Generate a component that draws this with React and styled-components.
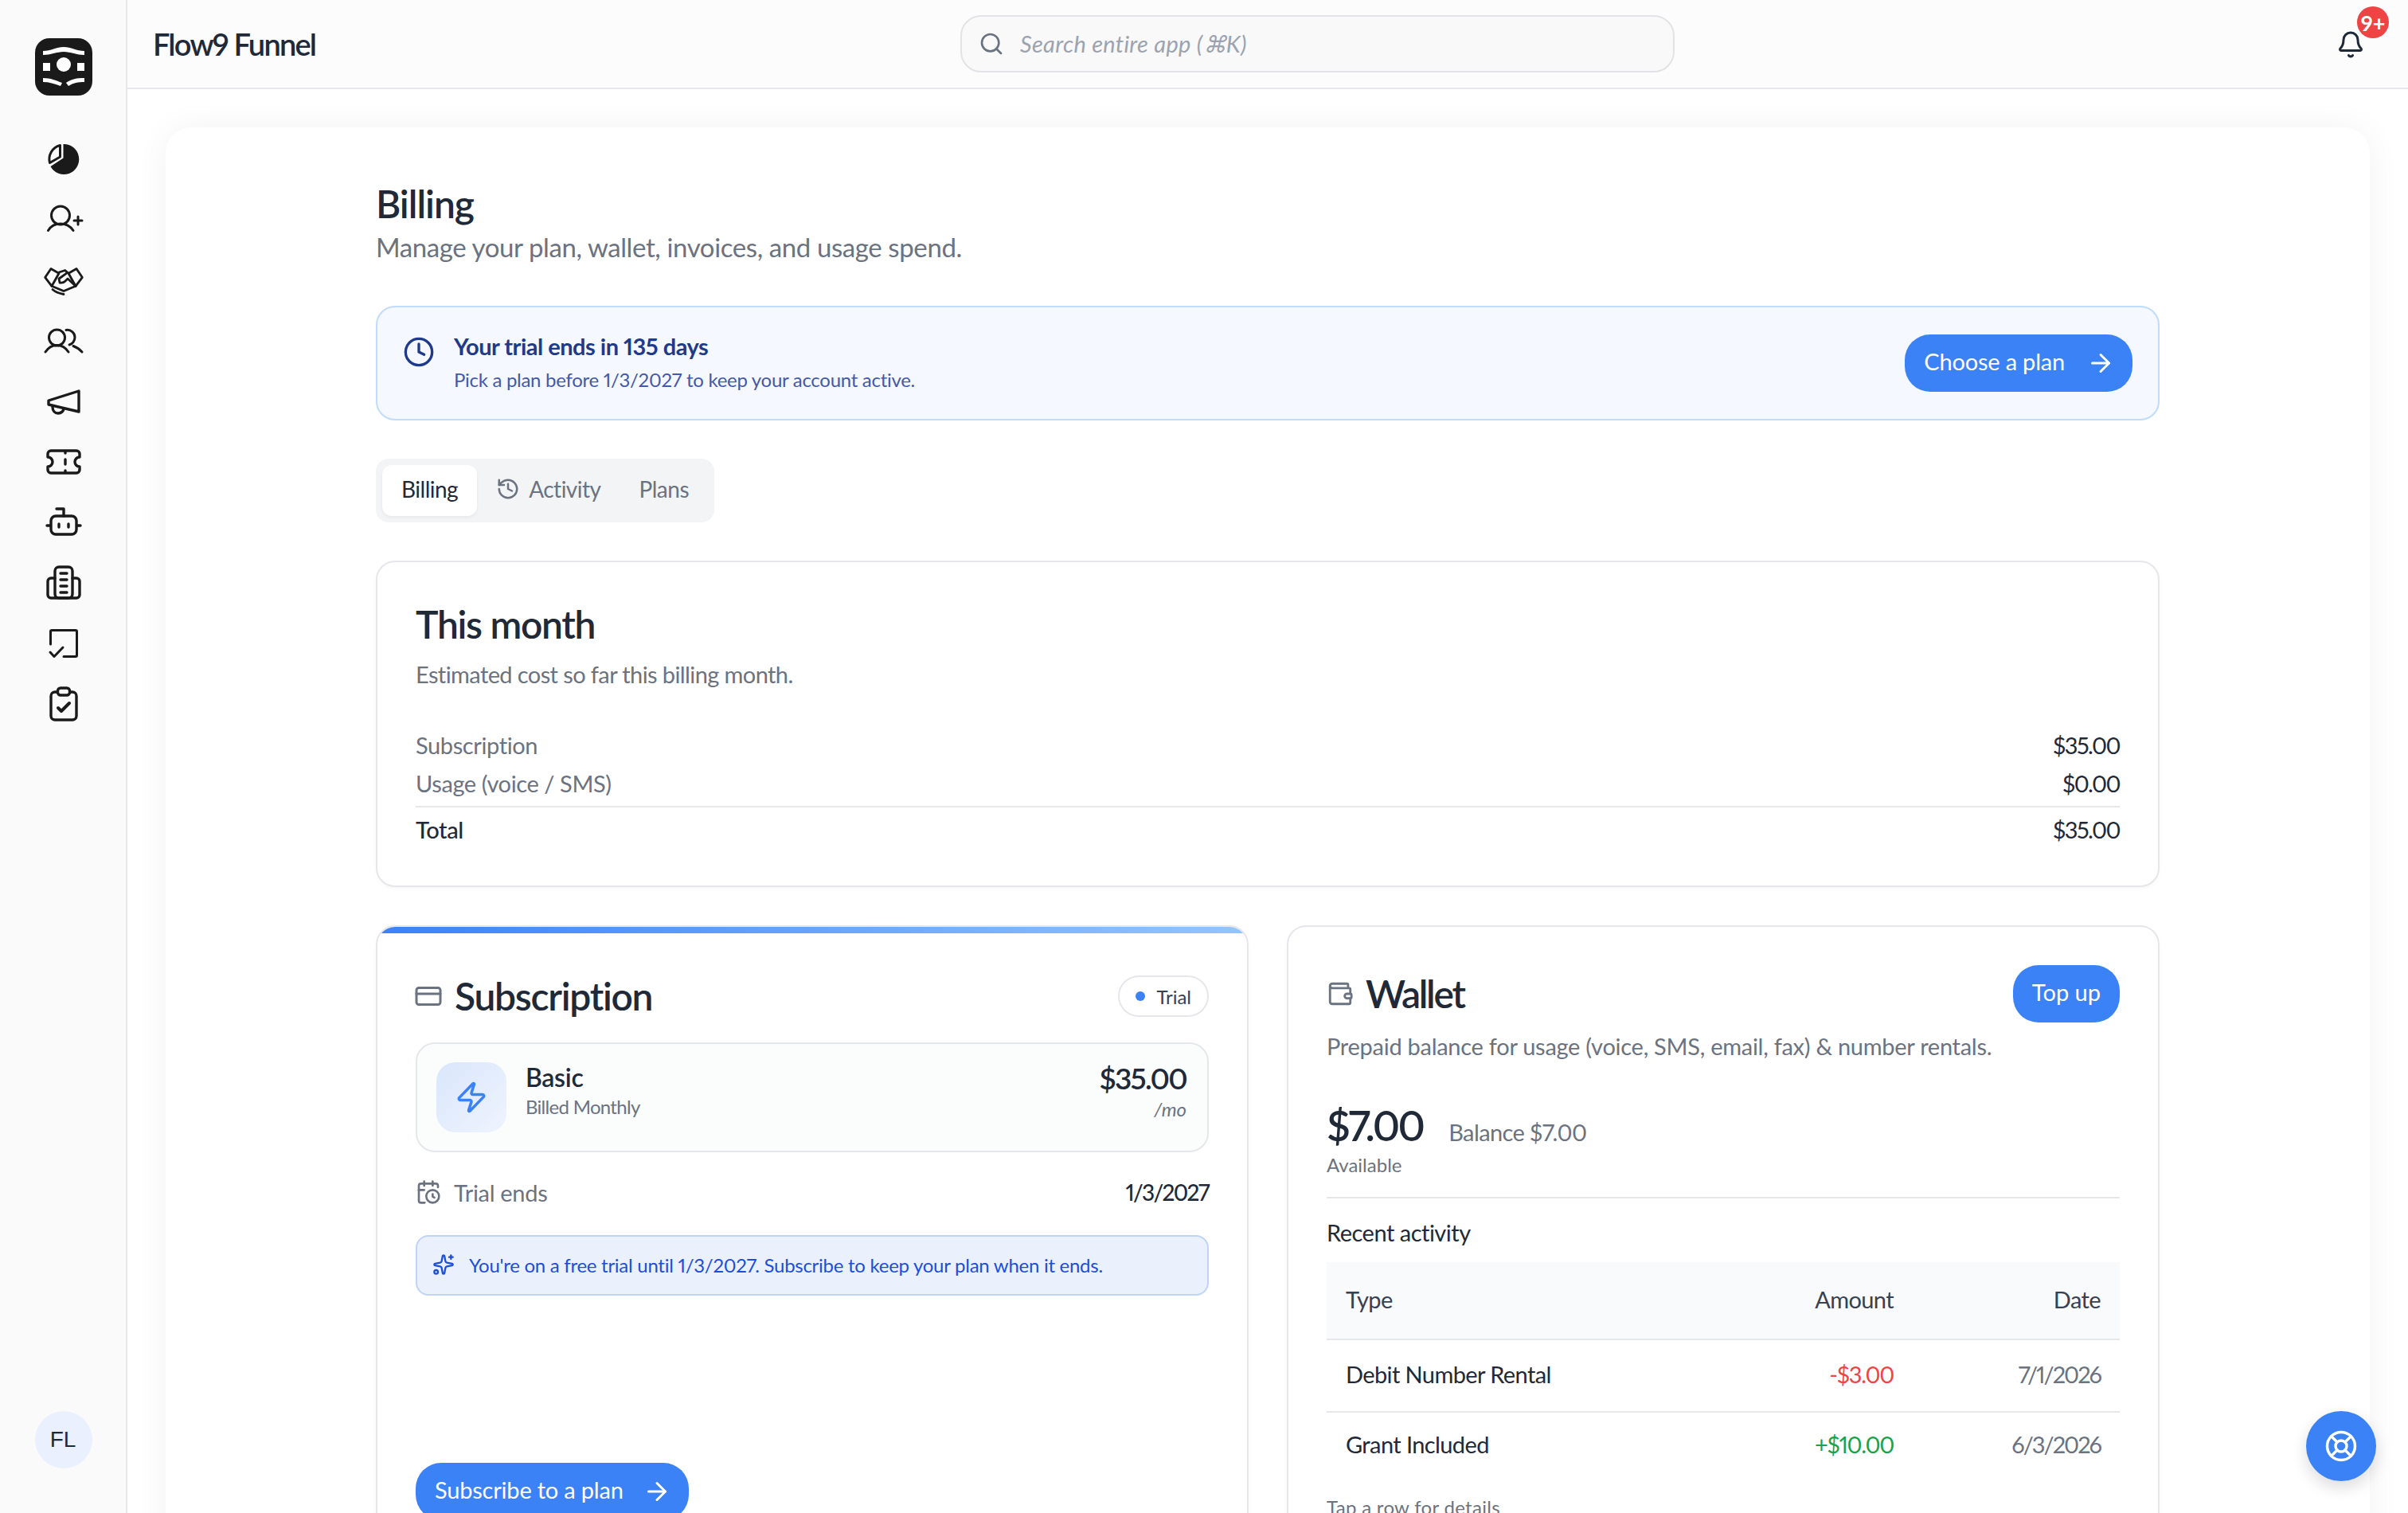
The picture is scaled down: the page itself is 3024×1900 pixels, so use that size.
import React from "react"
import styled, { createGlobalStyle } from "styled-components"
import {
  ArrowRight,
  Bell,
  CalendarClock,
  Clock,
  CreditCard,
  History,
  LifeBuoy,
  Search,
  Sparkles,
  Wallet,
  Zap,
} from "lucide-react"

const GlobalStyle = createGlobalStyle`
  html, body {
    margin: 0;
    padding: 0;
    height: 100%;
    overflow: hidden;
    background: #fff;
  }
  body {
    font-family: "Lato", "Noto Sans", sans-serif;
    font-variant-numeric: proportional-nums lining-nums;
    color: #1f2937;
  }
  * {
    box-sizing: border-box;
  }
`

const Shell = styled.div`
  display: grid;
  grid-template-columns: 160px 1fr;
  grid-template-rows: 1900px;
  height: 1900px;
  overflow: hidden;
`

const Sidebar = styled.aside`
  display: flex;
  flex-direction: column;
  align-items: center;
  padding: 48px 0 56px 2px;
  background: #fafafa;
  border-right: 2px solid #e5e7eb;
`

const Logo = styled.svg`
  width: 72px;
  height: 72px;
  flex: none;
`

const Nav = styled.nav`
  display: flex;
  flex-direction: column;
  gap: 32px;
  margin-top: 58px;
`

const NavIcon = styled.svg`
  display: block;
  width: 44px;
  height: 44px;
  overflow: visible;
  fill: none;
  stroke: #1a1a1a;
  stroke-width: ${p => p.$weight || 3.4};
  stroke-linecap: round;
  stroke-linejoin: round;
`

const Avatar = styled.div`
  display: flex;
  align-items: center;
  justify-content: center;
  width: 72px;
  height: 72px;
  margin-top: auto;
  padding-right: 2px;
  border-radius: 50%;
  background: #ebf0ff;
  color: #1f2937;
  font-family: "Liberation Sans", sans-serif;
  font-size: 28px;
`

const Column = styled.div`
  display: flex;
  flex-direction: column;
  min-width: 0;
  min-height: 0;
`

const Header = styled.header`
  display: grid;
  grid-template-columns: 1014px 897px 1fr;
  align-items: center;
  height: 112px;
  padding: 0 24px 0 32px;
  background: #fcfcfc;
  border-bottom: 2px solid #e5e7eb;
  flex: none;
`

const AppName = styled.div`
  font-size: 38px;
  font-weight: 600;
  letter-spacing: -1.8px;
  color: #1f2937;
`

const SearchBox = styled.div`
  display: flex;
  align-items: center;
  gap: 20px;
  height: 72px;
  padding: 0 21px;
  background: #f9f9f9;
  border: 2px solid #e2e3e7;
  border-radius: 26px;
  color: #6b7280;
`

const Placeholder = styled.span`
  font-size: 29px;
  font-style: italic;
  letter-spacing: 0.3px;
  color: #9ca3af;
`

const BellWrap = styled.div`
  position: relative;
  justify-self: end;
  width: 36px;
  height: 36px;
  margin-right: 30px;
  margin-top: 2px;
  color: #1f2937;
`

const Badge = styled.span`
  position: absolute;
  top: -30px;
  left: 26px;
  display: flex;
  align-items: center;
  justify-content: center;
  width: 40px;
  height: 40px;
  border-radius: 50%;
  background: #ef4444;
  color: #fff;
  font-size: 27px;
  font-weight: 700;
`

const Main = styled.main`
  flex: 1;
  min-height: 0;
  padding: 48px 48px 0;
  background: #fff;
`

const Page = styled.div`
  padding: 68px 264px 60px;
  background: #fff;
  border-radius: 32px;
  box-shadow: 0 0 44px rgba(0, 0, 0, 0.05);
`

const PageTitle = styled.h1`
  margin: 0;
  font-size: 48px;
  line-height: 56px;
  font-weight: 600;
  letter-spacing: -1px;
  color: #1f2937;
`

const PageSub = styled.p`
  margin: 6px 0 0;
  font-size: 33px;
  line-height: 40px;
  letter-spacing: -0.4px;
  color: #6b7280;
`

const TrialBanner = styled.section`
  display: flex;
  align-items: center;
  justify-content: space-between;
  height: 144px;
  margin-top: 54px;
  padding: 0 32px;
  background: #f5f8ff;
  border: 2px solid #bfdbfe;
  border-radius: 24px;
`

const BannerLeft = styled.div`
  display: flex;
  align-items: flex-start;
  gap: 24px;
  color: #1e3a8a;

  svg {
    margin-top: 5px;
  }
`

const BannerTitle = styled.div`
  margin-top: -2px;
  font-size: 29px;
  line-height: 40px;
  font-weight: 700;
  letter-spacing: -0.5px;
  color: #1e3a8a;
`

const BannerSub = styled.div`
  margin-top: 4px;
  font-size: 24px;
  line-height: 36px;
  letter-spacing: -0.29px;
  color: #4459a8;
`

const Button = styled.button`
  display: inline-flex;
  align-items: center;
  gap: ${p => p.$gap || 0}px;
  height: 72px;
  padding: 0 22px 0 24px;
  border: none;
  border-radius: 32px;
  background: #3b82f6;
  color: #fff;
  font-family: inherit;
  font-size: 29px;
  letter-spacing: -0.2px;
  white-space: nowrap;
`

const ButtonLabel = styled.span`
  margin-top: -6px;
`

const TopUpButton = styled(Button)`
  padding: 0 24px;
  letter-spacing: 0;
`

const Tabs = styled.div`
  display: inline-flex;
  align-items: center;
  height: 80px;
  margin-top: 48px;
  padding: 0 8px;
  background: #f3f4f6;
  border-radius: 16px;
`

const Tab = styled.div`
  display: flex;
  align-items: center;
  gap: 11px;
  height: 64px;
  padding: 0 24px 4px;
  border-radius: 12px;
  font-size: 28px;
  letter-spacing: -0.5px;
  color: ${p => (p.$active ? "#1f2937" : "#6b7280")};
  background: ${p => (p.$active ? "#fff" : "transparent")};
  box-shadow: ${p => (p.$active ? "0 2px 4px rgba(0,0,0,.05)" : "none")};
`

const Card = styled.section`
  position: relative;
  overflow: hidden;
  background: #fff;
  border: 2px solid #e5e7eb;
  border-radius: 24px;
  box-shadow: 0 2px 4px rgba(0, 0, 0, 0.03);
`

const MonthCard = styled(Card)`
  margin-top: 48px;
  padding: 50px 48px 46px;
`

const MonthTitle = styled.h2`
  margin: 0;
  font-size: 48px;
  line-height: 56px;
  font-weight: 600;
  letter-spacing: -1.3px;
  color: #1f2937;
`

const MutedLine = styled.p`
  margin: 15px 0 0;
  font-size: 29px;
  line-height: 40px;
  letter-spacing: -0.6px;
  color: #6b7280;
`

const CostRows = styled.div`
  margin-top: 45px;
`

const CostRow = styled.div`
  display: flex;
  justify-content: space-between;
  font-size: 29px;
  line-height: 48px;
  letter-spacing: -0.4px;
  color: #1f2937;
  ${p => p.$total && `
    margin-top: 4px;
    padding-top: 4px;
    border-top: 2px solid #e5e7eb;
  `}
`

const CostLabel = styled.span`
  color: ${p => (p.$strong ? "#1f2937" : "#6b7280")};
  font-weight: ${p => (p.$strong ? 500 : 400)};
`

const CostValue = styled.span`
  letter-spacing: -1.6px;
`

const TwoUp = styled.div`
  display: grid;
  grid-template-columns: 1fr 1fr;
  gap: 48px;
  margin-top: 48px;
`

const SubscriptionCard = styled(Card)`
  padding: 59px 48px 48px;

  &::before {
    content: "";
    position: absolute;
    top: 0;
    left: 0;
    right: 0;
    height: 8px;
    background: linear-gradient(90deg, #3b82f6, #93c5fd);
  }
`

const WalletCard = styled(Card)`
  padding: 48px 48px 40px;
`

const CardHead = styled.div`
  display: flex;
  align-items: center;
  justify-content: space-between;
`

const CardTitle = styled.div`
  display: flex;
  align-items: center;
  gap: ${p => p.$gap || 15}px;
  color: #6b7280;

  svg {
    margin-left: ${p => p.$nudge || 0}px;
  }
`

const CardTitleText = styled.h3`
  margin: 0;
  font-size: 48px;
  line-height: 56px;
  font-weight: 600;
  letter-spacing: ${p => p.$tracking || -1.3}px;
  color: #1f2937;
`

const StatusPill = styled.div`
  display: flex;
  align-items: center;
  gap: 14px;
  height: 52px;
  padding: 0 20px;
  border: 2px solid #e5e7eb;
  border-radius: 26px;
  font-size: 24px;
  color: #374151;
`

const Dot = styled.span`
  width: 12px;
  height: 12px;
  border-radius: 50%;
  background: #3b82f6;
`

const PlanBox = styled.div`
  display: flex;
  align-items: center;
  gap: 24px;
  height: 138px;
  margin-top: 30px;
  padding: 0 26px 0 24px;
  background: #fbfcfc;
  border: 2px solid #e5e7eb;
  border-radius: 24px;
`

const PlanTile = styled.div`
  display: flex;
  align-items: center;
  justify-content: center;
  width: 88px;
  height: 88px;
  border-radius: 24px;
  background: linear-gradient(135deg, #d9e6fb, #eff4fe);
  color: #3b82f6;
`

const PlanInfo = styled.div`
  flex: 1;
  padding-bottom: 16px;
`

const PlanName = styled.div`
  font-size: 32px;
  line-height: 40px;
  font-weight: 600;
  letter-spacing: -0.3px;
  color: #1f2937;
`

const SmallMuted = styled.div`
  font-size: 24px;
  line-height: 34px;
  color: #6b7280;
`

const BilledLine = styled(SmallMuted)`
  letter-spacing: -0.7px;
`

const PlanPrice = styled.div`
  padding-bottom: 14px;
  text-align: right;
`

const PriceValue = styled.div`
  font-size: 37px;
  line-height: 44px;
  font-weight: 600;
  letter-spacing: -1.8px;
  color: #1f2937;
`

const PriceUnit = styled(SmallMuted)`
  font-style: italic;
`

const TrialRow = styled.div`
  display: flex;
  align-items: center;
  justify-content: space-between;
  height: 40px;
  margin-top: 30px;
  margin-bottom: 1px;
`

const TrialLabel = styled.div`
  display: flex;
  align-items: center;
  gap: 16px;
  font-size: 29px;
  letter-spacing: -0.3px;
  color: #6b7280;
`

const TrialDate = styled.div`
  font-size: 28px;
  font-weight: 500;
  letter-spacing: -1.7px;
  color: #1f2937;
`

const InfoBox = styled.div`
  display: flex;
  align-items: center;
  gap: 18px;
  height: 76px;
  margin-top: 34px;
  padding: 0 19px 2px;
  background: #eaf1fd;
  border: 2px solid #bfd4f6;
  border-radius: 16px;
  color: #1d4ed8;
  font-size: 24px;
  letter-spacing: -0.27px;
`

const SubscribeButton = styled(Button)`
  margin-top: 210px;
`

const WalletNote = styled.p`
  margin: 10px 0 0;
  font-size: 29px;
  line-height: 40px;
  letter-spacing: -0.27px;
  color: #6b7280;
`

const BalanceRow = styled.div`
  display: flex;
  align-items: baseline;
  gap: 32px;
  margin-top: 47px;
`

const BalanceValue = styled.div`
  font-size: 52px;
  line-height: 64px;
  font-weight: 600;
  letter-spacing: -2.7px;
  color: #1f2937;
`

const BalanceText = styled.div`
  font-size: 29px;
  letter-spacing: -0.6px;
  color: #6b7280;
`

const Available = styled(SmallMuted)`
  margin-top: 2px;
  line-height: 32px;
`

const Rule = styled.hr`
  margin: 24px 0 0;
  border: none;
  border-top: 2px solid #e5e7eb;
`

const SectionLabel = styled.div`
  margin-top: 25px;
  font-size: 29px;
  line-height: 36px;
  padding-bottom: 4px;
  letter-spacing: -0.5px;
  color: #1f2937;
`

const Activity = styled.div`
  margin-top: 15px;
`

const ActivityRow = styled.div`
  display: grid;
  grid-template-columns: 1fr 260px 260px;
  align-items: center;
  height: ${p => p.$height || 89}px;
  padding: 0 24px 4px;
  font-size: 29px;
  letter-spacing: -0.6px;
  background: ${p => (p.$head ? "#f9fafb" : "transparent")};
  border-bottom: ${p => (p.$last ? "none" : "2px solid #e5e7eb")};
  color: ${p => (p.$head ? "#374151" : "#1f2937")};
`

const Cell = styled.div`
  text-align: ${p => (p.$right ? "right" : "left")};
  color: ${p => p.$color || "inherit"};
  letter-spacing: ${p => (p.$tracking ? `${p.$tracking}px` : "inherit")};
`

const TapNote = styled(SmallMuted)`
  margin-top: 20px;
  letter-spacing: 0.3px;
`

const HelpButton = styled.button`
  position: fixed;
  top: 1772px;
  left: 2896px;
  display: flex;
  align-items: center;
  justify-content: center;
  width: 88px;
  height: 88px;
  border: none;
  border-radius: 50%;
  background: #3b82f6;
  color: #fff;
  box-shadow: 0 8px 20px rgba(0, 0, 0, 0.14);
`

const PieIcon = () => (
  <NavIcon viewBox="0 0 44 44" $weight={3}>
    <path d="M21.5 3A19 19 0 1 1 5.5 31L21.5 20.5Z" fill="#1a1a1a" stroke="none" />
    <path d="M17.5 4.5V19L4.5 26.5A18 18 0 0 1 17.5 4.5Z" />
  </NavIcon>
)

const UserPlusIcon = () => (
  <NavIcon viewBox="0 0 44 44" $weight={3}>
    <circle cx="18" cy="16.5" r="11.5" />
    <path d="M2.5 35.5C6 29.5 12 27 18 27C24 27 30 29.5 34 35.5" />
    <path d="M40 18V28M35 23H45" />
  </NavIcon>
)

const HandshakeIcon = () => (
  <NavIcon viewBox="0 0 44 44" $weight={2.8}>
    <path d="M-1.3 18.3L6 7.5L16 13.3L7 29.3Z" />
    <path d="M45.3 18.3L38 7.5L28 13.3L37 29.3Z" />
    <path d="M16 12L23.7 9.5L28 13.3" />
    <path d="M25.3 13.3L16 20L17 25C20 25.5 22 25 23.7 23.3L27 20L37 29.3" />
    <path d="M7 29.3L22 35.5L37 29.3" />
    <path d="M8 33.5C12 37 16 38.5 22 39.5" />
  </NavIcon>
)

const UsersIcon = () => (
  <NavIcon viewBox="0 0 44 44" $weight={3}>
    <circle cx="13.5" cy="18" r="10" />
    <path d="M-1 36C3 30 8 27.5 13.5 27.5C19 27.5 24 30 28 36" />
    <path d="M25 8.5C31 7.5 36 12 36 17.5C36 22 33 26 29 27" />
    <path d="M34 28.5C38 30 42 32.5 45 36" />
  </NavIcon>
)

const MegaphoneIcon = () => (
  <NavIcon viewBox="0 0 44 44">
    <path d="M41 9L3 21V26L41 35Z" />
    <path d="M8 29C8 34 11 37 15 37C19 37 22 34 22 31" />
  </NavIcon>
)

const TicketIcon = () => (
  <NavIcon viewBox="0 0 44 44">
    <path d="M6 8H38A4 4 0 0 1 42 12V16A6 6 0 0 0 42 28V32A4 4 0 0 1 38 36H6A4 4 0 0 1 2 32V28A6 6 0 0 0 2 16V12A4 4 0 0 1 6 8Z" />
    <path d="M24 9V11M24 19V25M24 33V35" />
  </NavIcon>
)

const BotIcon = () => (
  <NavIcon viewBox="0 0 44 44">
    <rect x="6" y="14" width="32" height="23" rx="6" />
    <path d="M22 14V5H13" />
    <path d="M1 26H5M39 26H43" />
    <path d="M16 24V28M28 24V28" />
  </NavIcon>
)

const BuildingIcon = () => (
  <NavIcon viewBox="0 0 44 44">
    <rect x="11" y="2" width="22" height="39" rx="5" />
    <path d="M11 16H6A4 4 0 0 0 2 20V37A4 4 0 0 0 6 41H38A4 4 0 0 0 42 37V20A4 4 0 0 0 38 16H33" />
    <path d="M18 10H26M18 18H26M18 26H26M18 34H26" />
  </NavIcon>
)

const ChatCheckIcon = () => (
  <NavIcon viewBox="0 0 44 44" $weight={3}>
    <path d="M5.5 23V7A1.5 1.5 0 0 1 7 5.5H37A1.5 1.5 0 0 1 38.5 7V37A1.5 1.5 0 0 1 37 38.5H22" />
    <path d="M5 33L10 38.5L21 27" />
  </NavIcon>
)

const ClipboardIcon = () => (
  <NavIcon viewBox="0 0 44 44">
    <rect x="6" y="7" width="32" height="35" rx="5" />
    <rect x="14.5" y="2" width="15" height="9" rx="3.5" fill="#fafafa" />
    <path d="M15 27L19 31L29 21" strokeWidth="4" />
  </NavIcon>
)

const navIcons = [
  PieIcon,
  UserPlusIcon,
  HandshakeIcon,
  UsersIcon,
  MegaphoneIcon,
  TicketIcon,
  BotIcon,
  BuildingIcon,
  ChatCheckIcon,
  ClipboardIcon,
]

const activity = [
  { type: "Debit Number Rental", amount: "-$3.00", color: "#ef4444", date: "7/1/2026" },
  { type: "Grant Included", amount: "+$10.00", color: "#16a34a", date: "6/3/2026", last: true },
]

const App = () => (
  <>
    <GlobalStyle />
    <Shell>
      <Sidebar>
        <Logo viewBox="0 0 72 72">
          <rect width="72" height="72" rx="18" fill="#1a1a1a" />
          <path d="M10 16C20 16 27 11 36 11C45 11 52 16 62 16V21C52 21 45 17 36 17C27 17 20 21 10 21Z" fill="#fff" />
          <circle cx="36" cy="33" r="9" fill="#fff" />
          <path d="M10 31H19V41H10ZM53 31H62V41H53Z" fill="#fff" />
          <path d="M10 50C20 50 26 53 34 56L32 60C24 57 18 55 10 55ZM62 50C52 50 46 51 39 56L42 60C48 56 54 55 62 55Z" fill="#fff" />
        </Logo>
        <Nav>
          {navIcons.map((Icon, i) => (
            <Icon key={i} />
          ))}
        </Nav>
        <Avatar>FL</Avatar>
      </Sidebar>
      <Column>
        <Header>
          <AppName>Flow9 Funnel</AppName>
          <SearchBox>
            <Search size={32} />
            <Placeholder>Search entire app (⌘K)</Placeholder>
          </SearchBox>
          <BellWrap>
            <Bell size={36} />
            <Badge>9+</Badge>
          </BellWrap>
        </Header>
        <Main>
          <Page>
            <PageTitle>Billing</PageTitle>
            <PageSub>Manage your plan, wallet, invoices, and usage spend.</PageSub>

            <TrialBanner>
              <BannerLeft>
                <Clock size={40} />
                <div>
                  <BannerTitle>Your trial ends in 135 days</BannerTitle>
                  <BannerSub>Pick a plan before 1/3/2027 to keep your account active.</BannerSub>
                </div>
              </BannerLeft>
              <Button $gap={27}>
                <ButtonLabel>Choose a plan</ButtonLabel>
                <ArrowRight size={36} />
              </Button>
            </TrialBanner>

            <Tabs>
              <Tab $active>Billing</Tab>
              <Tab>
                <History size={30} />
                Activity
              </Tab>
              <Tab>Plans</Tab>
            </Tabs>

            <MonthCard>
              <MonthTitle>This month</MonthTitle>
              <MutedLine>Estimated cost so far this billing month.</MutedLine>
              <CostRows>
                <CostRow>
                  <CostLabel>Subscription</CostLabel>
                  <CostValue>$35.00</CostValue>
                </CostRow>
                <CostRow>
                  <CostLabel>Usage (voice / SMS)</CostLabel>
                  <CostValue>$0.00</CostValue>
                </CostRow>
                <CostRow $total>
                  <CostLabel $strong>Total</CostLabel>
                  <CostValue>$35.00</CostValue>
                </CostRow>
              </CostRows>
            </MonthCard>

            <TwoUp>
              <SubscriptionCard>
                <CardHead>
                  <CardTitle $nudge={-2}>
                    <CreditCard size={36} />
                    <CardTitleText>Subscription</CardTitleText>
                  </CardTitle>
                  <StatusPill>
                    <Dot />
                    Trial
                  </StatusPill>
                </CardHead>
                <PlanBox>
                  <PlanTile>
                    <Zap size={42} />
                  </PlanTile>
                  <PlanInfo>
                    <PlanName>Basic</PlanName>
                    <BilledLine>Billed Monthly</BilledLine>
                  </PlanInfo>
                  <PlanPrice>
                    <PriceValue>$35.00</PriceValue>
                    <PriceUnit>/mo</PriceUnit>
                  </PlanPrice>
                </PlanBox>
                <TrialRow>
                  <TrialLabel>
                    <CalendarClock size={32} />
                    Trial ends
                  </TrialLabel>
                  <TrialDate>1/3/2027</TrialDate>
                </TrialRow>
                <InfoBox>
                  <Sparkles size={28} />
                  You're on a free trial until 1/3/2027. Subscribe to keep your plan when it ends.
                </InfoBox>
                <SubscribeButton $gap={24}>
                  <ButtonLabel>Subscribe to a plan</ButtonLabel>
                  <ArrowRight size={36} />
                </SubscribeButton>
              </SubscriptionCard>

              <WalletCard>
                <CardHead>
                  <CardTitle $gap={15}>
                    <Wallet size={34} />
                    <CardTitleText $tracking={-2.3}>Wallet</CardTitleText>
                  </CardTitle>
                  <TopUpButton>
                    <ButtonLabel>Top up</ButtonLabel>
                  </TopUpButton>
                </CardHead>
                <WalletNote>Prepaid balance for usage (voice, SMS, email, fax) &amp; number rentals.</WalletNote>
                <BalanceRow>
                  <BalanceValue>$7.00</BalanceValue>
                  <BalanceText>Balance $7.00</BalanceText>
                </BalanceRow>
                <Available>Available</Available>
                <Rule />
                <SectionLabel>Recent activity</SectionLabel>
                <Activity>
                  <ActivityRow $head $height={98}>
                    <Cell>Type</Cell>
                    <Cell $right>Amount</Cell>
                    <Cell $right>Date</Cell>
                  </ActivityRow>
                  {activity.map(row => (
                    <ActivityRow key={row.type} $last={row.last} $height={row.last ? 82 : 91}>
                      <Cell>{row.type}</Cell>
                      <Cell $right $tracking={-1.3} $color={row.color}>{row.amount}</Cell>
                      <Cell $right $tracking={-2} $color="#6b7280">{row.date}</Cell>
                    </ActivityRow>
                  ))}
                </Activity>
                <TapNote>Tap a row for details</TapNote>
              </WalletCard>
            </TwoUp>
          </Page>
        </Main>
      </Column>
    </Shell>
    <HelpButton aria-label="Help">
      <LifeBuoy size={42} />
    </HelpButton>
  </>
)

export default App
